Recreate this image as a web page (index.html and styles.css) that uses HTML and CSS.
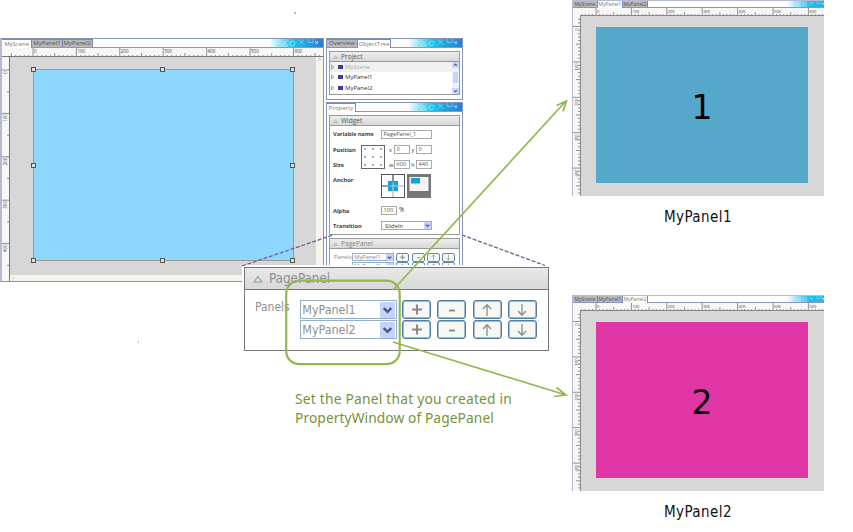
FILE: index.html
```html
<!DOCTYPE html>
<html lang="en">
<head>
<meta charset="utf-8">
<title>PagePanel</title>
<link rel="stylesheet" href="styles.css">
</head>
<body>
<svg class="defs" aria-hidden="true">
  <symbol id="deco" viewBox="0 0 50 9"><g fill="none" stroke="#fff" stroke-opacity=".55" stroke-width=".8"><path d="M7 8l3-5 3 5z"/><circle cx="19" cy="5" r="2.6"/><path d="M26.500 1l5 5m0-5l-5 5M37 0v4h5V0"/></g><path d="M44.500 2.500l3 3m0-3l-3 3" stroke="#fff" stroke-width=".9"/></symbol>
  <symbol id="chev" viewBox="0 0 10 10"><path d="M2.500 3.800L5 6.200l2.500-2.400" fill="none" stroke="#47598a" stroke-width="1.700"/></symbol>
  <symbol id="tri" viewBox="0 0 10 8"><path d="M1 7l4-5.500L9 7z" fill="none" stroke="#999" stroke-width="1.100"/></symbol>
  <symbol id="plus" viewBox="0 0 14 14"><path d="M2 6.500h10M7 1.500v10" stroke="#8a8a8a" stroke-width="2.100"/></symbol>
  <symbol id="minus" viewBox="0 0 14 14"><path d="M4 7.500h6" stroke="#8a8a8a" stroke-width="1.900"/></symbol>
  <symbol id="up" viewBox="0 0 14 14"><path d="M7 13V2M3 6l4-4.300L11 6" fill="none" stroke="#8c8c8c" stroke-width="1.300"/></symbol>
  <symbol id="down" viewBox="0 0 14 14"><path d="M7 1v11M3 8l4 4.300L11 8" fill="none" stroke="#8c8c8c" stroke-width="1.300"/></symbol>
</svg>
<main class="board">
  <section class="window scene">
    <header class="bar"><span class="tab active">MyScene</span><span class="tab">MyPanel1</span><span class="tab">MyPanel2</span><svg class="deco"><use href="#deco"/></svg></header>
    <svg class="ruler top" data-zero="31" data-step="43.4" data-length="321" data-size="9" data-start="9"></svg>
    <svg class="ruler side" data-zero="13" data-step="43.4" data-length="225" data-size="9" data-start="0"></svg>
    <div class="stage">
      <div class="page">
        <i class="h nw"></i><i class="h n"></i><i class="h ne"></i><i class="h w"></i><i class="h e"></i><i class="h sw"></i><i class="h s"></i><i class="h se"></i>
      </div>
    </div>
    <div class="vscroll">^</div>
    <div class="hscroll">‹</div>
  </section>

  <section class="window tree">
    <header class="bar"><span class="tab">Overview</span><span class="tab active">ObjectTree</span><svg class="deco"><use href="#deco"/></svg></header>
    <div class="group">
      <h3><svg><use href="#tri"/></svg>Project</h3>
      <div class="list">
        <ul>
          <li class="dim"><svg viewBox="0 0 4 6"><path d="M.5 1L3 3 .5 5z"/></svg><b></b>MyScene</li>
          <li><svg viewBox="0 0 4 6"><path d="M.5 1L3 3 .5 5z"/></svg><b></b>MyPanel1</li>
          <li><svg viewBox="0 0 4 6"><path d="M.5 1L3 3 .5 5z"/></svg><b></b>MyPanel2</li>
        </ul>
        <div class="scrollbar"><svg class="flip"><use href="#chev"/></svg><span></span><svg><use href="#chev"/></svg></div>
      </div>
    </div>
  </section>

  <section class="window property">
    <header class="bar"><span class="tab active">Property</span><svg class="deco"><use href="#deco"/></svg></header>
    <div class="group widget">
      <h3><svg><use href="#tri"/></svg>Widget</h3>
      <div class="form">
        <label class="name">Variable name</label><span class="field wide">PagePanel_1</span>
        <label class="position">Position</label>
        <svg class="nine" viewBox="0 0 24 24"><rect x=".5" y=".5" width="23" height="23" fill="#fff" stroke="#666"/><g fill="#aaa"><path d="M3 3h2v2H3zM11 3h2v2h-2zM19 3h2v2h-2zM3 11h2v2H3zM11 11h2v2h-2zM19 11h2v2h-2zM3 19h2v2H3zM11 19h2v2h-2zM19 19h2v2h-2z"/></g></svg>
        <div class="pair position"><span>x</span><span class="field">0</span><span>y</span><span class="field">0</span></div>
        <label class="size">Size</label>
        <div class="pair size"><span>w</span><span class="field">600</span><span>h</span><span class="field">440</span></div>
        <label class="anchor">Anchor</label>
        <div class="anchors">
          <svg viewBox="0 0 24 24"><rect x=".5" y=".5" width="23" height="23" fill="#fff" stroke="#555"/><rect x="7" y="7" width="10" height="10" fill="#0ba5dc"/><path d="M12 7v16M12 12h11" stroke="#aaa"/><path d="M12 1v8M1 12h8" stroke="#24456e" stroke-width="1.200"/><path d="M7 12h10M12 7v10" stroke="#8fd8f2" stroke-width=".8"/></svg>
          <svg viewBox="0 0 24 24"><rect width="24" height="24" fill="#777"/><rect x="2.500" y="3" width="19" height="14" fill="#f5f5f5"/><rect x="4" y="4" width="9" height="5.500" fill="#0ba5dc"/></svg>
        </div>
        <label class="alpha">Alpha</label><div class="percent"><span class="field">100</span>%</div>
        <label class="transition">Transition</label><span class="combo transition">SlideIn<svg><use href="#chev"/></svg></span>
      </div>
    </div>
    <div class="group pages">
      <h3><svg><use href="#tri"/></svg>PagePanel</h3>
      <div class="panels">
        <span>Panels</span><span class="combo">MyPanel1<svg><use href="#chev"/></svg></span><button><svg><use href="#plus"/></svg></button><button><svg><use href="#minus"/></svg></button><button><svg><use href="#up"/></svg></button><button><svg><use href="#down"/></svg></button>
        <span></span><span class="combo">MyPanel2<svg><use href="#chev"/></svg></span><button><svg><use href="#plus"/></svg></button><button><svg><use href="#minus"/></svg></button><button><svg><use href="#up"/></svg></button><button><svg><use href="#down"/></svg></button>
      </div>
    </div>
  </section>

  <figure class="preview first">
    <div class="window mini">
      <header class="bar"><span class="tab">MyScene</span><span class="tab active">MyPanel1</span><span class="tab">MyPanel2</span><svg class="deco"><use href="#deco"/></svg></header>
      <svg class="ruler top" data-zero="23" data-step="35.4" data-length="252" data-size="8" data-start="7"></svg>
      <svg class="ruler side" data-zero="11.5" data-step="35.4" data-length="181" data-size="7" data-start="1"></svg>
      <div class="stage"><div class="page blue">1</div></div>
    </div>
    <figcaption>MyPanel1</figcaption>
  </figure>
  <figure class="preview second">
    <div class="window mini">
      <header class="bar"><span class="tab">MyScene</span><span class="tab">MyPanel1</span><span class="tab active">MyPanel2</span><svg class="deco"><use href="#deco"/></svg></header>
      <svg class="ruler top" data-zero="23" data-step="35.4" data-length="252" data-size="8" data-start="7"></svg>
      <svg class="ruler side" data-zero="11.5" data-step="35.4" data-length="181" data-size="7" data-start="1"></svg>
      <div class="stage"><div class="page pink">2</div></div>
    </div>
    <figcaption>MyPanel2</figcaption>
  </figure>

  <section class="callout">
    <h2><svg><use href="#tri"/></svg>PagePanel</h2>
    <div class="rows">
      <span>Panels</span><span class="combo">MyPanel1<svg><use href="#chev"/></svg></span><button><svg><use href="#plus"/></svg></button><button><svg><use href="#minus"/></svg></button><button><svg><use href="#up"/></svg></button><button><svg><use href="#down"/></svg></button>
      <span></span><span class="combo">MyPanel2<svg><use href="#chev"/></svg></span><button><svg><use href="#plus"/></svg></button><button><svg><use href="#minus"/></svg></button><button><svg><use href="#up"/></svg></button><button><svg><use href="#down"/></svg></button>
    </div>
  </section>
  <p class="note"><span>Set the Panel that you created in</span><br>PropertyWindow of PagePanel</p>
  <svg class="arrows" viewBox="0 0 853 532">
    <g fill="none" stroke="#7a58a0" stroke-width="1.300" stroke-dasharray="4 1.700"><path d="M242 266l91-31M462 235l83 30.500"/></g>
    <g fill="none" stroke="#93b84f" stroke-width="1.700"><rect x="286.200" y="280.700" width="113.500" height="83.500" rx="13" stroke-width="2.200"/><path d="M393 290L566 101M556.500 105.500l10-4.500-3.500 10.500M393 342l173 53M556.500 387.500l9.500 7.500-12 1.500"/></g>
    <path d="M294 13h2M138 342h1" stroke="#777"/>
  </svg>
</main>
<script src="script.js"></script>
</body>
</html>
```
FILE: styles.css
```css
* { box-sizing: border-box; }
body { margin: 0; background: #fff; font-family: "Open Sans", "Noto Sans", sans-serif; }
h2, h3, p, ul, figure { margin: 0; padding: 0; font-weight: normal; }
button { padding: 0; font: inherit; }
.defs { position: absolute; width: 0; height: 0; }
.board { position: relative; width: 853px; height: 532px; overflow: hidden; }
.board > * { position: absolute; }

.window { background: #fff; border: 1px solid #8592bd; overflow: hidden; }
.bar { display: flex; height: 9px; align-items: stretch; border-bottom: 1px solid #8b96c0; background: linear-gradient(90deg, #fff calc(100% - 54px), #20c3e8 calc(100% - 30px), #2a7dd3); }
.tab { display: flex; align-items: center; justify-content: center; border: 1px solid #7d88ad; border-width: 1px 1px 0 0; background: #b8b8b8; color: #555; font-size: 6px; line-height: 7px; white-space: nowrap; }
.tab.active { background: #fff; color: #777; margin-bottom: -1px; }
.deco { width: 50px; height: 8px; margin-left: auto; }
.ruler { display: block; background: #f7f7f7; }
.ruler path { stroke: #777; stroke-width: .8; fill: none; }
.ruler text { font: 4.5px "Open Sans", sans-serif; fill: #444; }

.scene { left: 0; top: 38px; width: 324px; height: 244px; border-left: 2px solid #b5b9d8; display: grid; grid-template: 9px 9px 218px 7px / 8px 306px 7px; }
.scene .bar, .scene .ruler.top { grid-column: 1 / 4; }
.scene .bar .tab { width: 30.3px; }
.scene .ruler.top { width: 321px; height: 9px; border-bottom: 1px solid #777; }
.scene .ruler.side { grid-row: 3 / 5; width: 8px; height: 225px; border-right: 1px solid #777; }
.scene .stage { background: #d7d7d7; padding: 12px 0 0 23px; }
.scene .page { position: relative; width: 261px; height: 192px; background: #8ed8ff; border: 1px solid #999; }
.h { position: absolute; width: 5px; height: 5px; border: 1px solid #555; background: #ddd; }
.nw, .n, .ne { top: -3px; } .w, .e { top: 93px; } .sw, .s, .se { bottom: -3px; }
.nw, .w, .sw { left: -3px; } .n, .s { left: 126px; } .ne, .e, .se { right: -2px; }
.vscroll, .hscroll { background: #f5f4ef; color: #aaa; font-size: 7px; line-height: 8px; text-align: center; }
.hscroll { grid-column: 2 / 4; text-align: left; padding-left: 2px; line-height: 6px; }

.tree { left: 326px; top: 38px; width: 137px; height: 62px; }
.tree .tab { width: 31px; }
.tree .tab.active { width: 33px; }
.property { left: 326px; top: 102px; width: 137px; height: 166px; }
.property .tab { width: 29px; }
.tree, .property { font-size: 6.2px; color: #333; }
.group { margin: 3px 2px 0; border: 1px solid #999; }
.group h3 { display: flex; align-items: center; gap: 3px; height: 10px; padding-left: 3px; border-bottom: 1px solid #999; background: linear-gradient(#eee, #d8d8d8); font-size: 6.6px; color: #555; }
.group h3 svg { width: 5px; height: 4px; }
.list { display: flex; height: 32px; }
ul { flex: 1; list-style: none; }
li { display: flex; align-items: center; height: 10.3px; padding-left: 1px; font-size: 6px; }
li svg { width: 4px; height: 6px; fill: none; stroke: #888; stroke-width: .7; }
li b { width: 5px; height: 4px; margin: 0 2px 0 3px; background: #4038a8; }
.dim { background: #f0f0f0; color: #aaa; }
.scrollbar { display: flex; flex-direction: column; width: 7px; background: #eef2fd; }
.scrollbar svg { width: 7px; height: 6px; background: #cbd8fb; }
.scrollbar span { flex: 1; margin: 4px 1px 5px; background: #c6d4fb; }
.flip { transform: rotate(180deg); }

.widget { height: 120px; }
.form { display: grid; grid-template: 16px 15px 15px 31px 15px 15px / 28px 24px 72px; padding-left: 3px; align-items: center; line-height: 8px; }
.form label { grid-column: 1; font-weight: bold; font-size: 5.8px; white-space: nowrap; color: #444; letter-spacing: -.1px; }
label.name { grid-row: 1; } label.position { grid-row: 2; } label.size { grid-row: 3; }
label.anchor { grid-row: 4; align-self: start; padding-top: 4px; } label.alpha { grid-row: 5; } label.transition { grid-row: 6; }
.field { display: block; height: 9px; width: 16px; padding-left: 1.5px; border: 1px solid #aaa; background: #fff; line-height: 7px; font-size: 5.6px; color: #555; }
.wide { width: 51px; grid-row: 1; grid-column: 3; }
.wide, .anchors, .percent, .combo.transition { margin-left: -4px; }
.nine { grid-row: 2 / 4; grid-column: 2; width: 24px; height: 24px; }
.pair { grid-column: 3; display: grid; grid-template-columns: 5px 16px 6px 16px; margin-left: 4px; align-items: center; font-size: 5.5px; }
.pair span:nth-child(3) { text-align: center; }
.pair.position { grid-row: 2; } .pair.size { grid-row: 3; }
.anchors { grid-row: 4; grid-column: 3; display: flex; gap: 2px; align-self: start; padding-top: 2px; }
.anchors svg { width: 24px; height: 24px; }
.percent { grid-row: 5; grid-column: 3; display: flex; gap: 2px; }
.combo { display: flex; align-items: center; justify-content: space-between; border: 1px solid #91afcf; background: #fff; white-space: nowrap; }
.combo svg { background: #c3d3fb; border-radius: 1px; }
.combo.transition { grid-row: 6; grid-column: 3; width: 51px; height: 9px; padding-left: 3px; font-size: 5.8px; }
.group .combo svg { width: 7px; height: 7px; }
.pages h3 { color: #888; }
.panels { display: grid; grid-template: 9px 9px / 17px 42px repeat(4, 13px); column-gap: 2.2px; padding: 4px 0 0 3px; color: #888; font-size: 5.8px; line-height: 8px; }
.panels > * { height: 8px; padding-left: 1px; }
button { display: flex; align-items: center; justify-content: center; border: 1px solid #6389ac; border-radius: 2px; background: #f7f7f3; }
.panels button { width: 13px; height: 9px; padding: 0; }
.panels button svg { width: 7px; height: 7px; }

.preview { width: 253px; height: 235px; }
.first { left: 572px; top: 0; }
.second { left: 572px; top: 295px; }
.mini { width: 252px; height: 196px; border-width: 1px 0 0 1px; border-color: #b6bad4; display: grid; grid-template: 7px 7px 181px / 7px 244px; }
.mini .bar, .mini .ruler.top { grid-column: 1 / 3; }
.mini .bar { height: 7px; background: linear-gradient(90deg, #fff calc(100% - 37px), #20b9ec calc(100% - 14px)); }
.mini .tab { width: 25px; font-size: 5px; line-height: 5px; border-top-width: 0; }
.mini .deco { width: 38px; height: 6px; margin-right: -4px; }
.mini .ruler.top { width: 251px; height: 8px; }
.mini .ruler.side { width: 7px; height: 181px; }
.mini .ruler text { font-size: 4px; }
.mini .stage { background: #d7d7d7; padding: 11px 0 0 15px; border: 1px solid #888; border-width: 1px 0 0 1px; }
.mini .page { display: flex; align-items: center; justify-content: center; width: 212px; height: 156px; padding-top: 5px; font: 33px "DejaVu Sans", sans-serif; color: #000; }
.blue { background: #55a8ca; }
.pink { background: #e137a6; }
figcaption { padding: 11px 1px 0 0; font: 15px/20px "DejaVu Sans Condensed", "DejaVu Sans", sans-serif; letter-spacing: .45px; text-align: center; color: #111; }

.callout { left: 244px; top: 267px; width: 305px; height: 84px; background: #fff; border: 1.500px solid #777; outline: 2px solid #fff; font-family: "DejaVu Sans Condensed", "DejaVu Sans", sans-serif; color: #909090; }
.callout h2 { display: flex; align-items: center; gap: 6px; height: 22px; padding-left: 8px; border-bottom: 1px solid #777; background: linear-gradient(#e9e9e9, #d8d8d8); font-size: 13.300px; }
.callout h2 svg { width: 10px; height: 8px; }
.rows { display: grid; grid-template: 19px 19px / 39px 95.5px repeat(4, 29px); gap: 1px 6.3px; padding: 10px 0 0 10px; font-size: 12px; }
.rows > .combo { width: 97px; height: 19px; padding: 0 1px; font-size: 12.400px; }
.rows .combo svg { width: 15px; height: 16px; }
.rows button { height: 19px; border-width: 1.500px; border-color: #4f7da7; border-radius: 3px; box-shadow: inset 0 0 0 .5px #4f7da7; }
.rows button svg { width: 14px; height: 14px; }
.note { left: 295px; top: 388.500px; font: 13.800px/19px "Noto Sans", sans-serif; letter-spacing: .07px; color: #76933c; white-space: nowrap; }
.note span { letter-spacing: .21px; }
.arrows { inset: 0; width: 853px; height: 532px; pointer-events: none; }
```
FILE: script.js
```javascript
// Draws ticks every ten units and a label every hundred on each ruler.
const NS = "http://www.w3.org/2000/svg";
document.querySelectorAll(".ruler").forEach((ruler) => {
  const zero = +ruler.dataset.zero;
  const step = +ruler.dataset.step;
  const length = +ruler.dataset.length;
  const size = +ruler.dataset.size;
  const start = +ruler.dataset.start;
  const side = ruler.classList.contains("side");
  let d = "";
  for (let i = -10; i < 80; i++) {
    const at = zero + (i * step) / 10;
    if (at < start || at > length) continue;
    const major = i % 10 === 0 && i >= 0;
    const tick = major ? size : i % 5 === 0 ? 4 : 2;
    d += side ? `M${size - tick} ${at}h${tick}` : `M${at} ${size - tick}v${tick}`;
    if (major) {
      const text = document.createElementNS(NS, "text");
      text.textContent = i * 10;
      if (side) {
        text.setAttribute("transform", `translate(4.5 ${at + (i ? 8.5 : 4)}) rotate(-90)`);
      } else {
        text.setAttribute("x", at + 1);
        text.setAttribute("y", 4.5);
      }
      ruler.append(text);
    }
  }
  const path = document.createElementNS(NS, "path");
  path.setAttribute("d", d);
  ruler.append(path);
});
```
